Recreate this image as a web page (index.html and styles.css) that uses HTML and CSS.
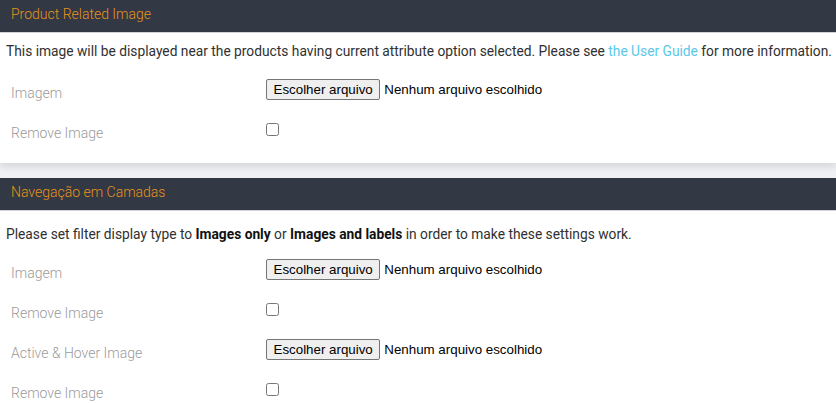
FILE: index.html
```html
<!DOCTYPE html>
<html lang="pt-BR">
<head>
<meta charset="utf-8">
<link rel="stylesheet" href="styles.css">
</head>
<body>
<section class="panel">
  <div class="panel-head">Product Related Image</div>
  <div class="panel-body">
    <p class="desc">This image will be displayed near the products having current attribute option selected. Please see <a href="#">the User Guide</a> for more information.</p>
    <div class="row">
      <div class="label">Imagem</div>
      <div class="value"><span class="file-btn">Escolher arquivo</span><span class="file-name">Nenhum arquivo escolhido</span></div>
    </div>
    <div class="row">
      <div class="label">Remove Image</div>
      <div class="value"><input type="checkbox" class="check"></div>
    </div>
  </div>
</section>
<section class="panel second">
  <div class="panel-head">Navegação em Camadas</div>
  <div class="panel-body">
    <p class="desc">Please set filter display type to <b>Images only</b> or <b>Images and labels</b> in order to make these settings work.</p>
    <div class="row">
      <div class="label">Imagem</div>
      <div class="value"><span class="file-btn">Escolher arquivo</span><span class="file-name">Nenhum arquivo escolhido</span></div>
    </div>
    <div class="row">
      <div class="label">Remove Image</div>
      <div class="value"><input type="checkbox" class="check"></div>
    </div>
    <div class="row">
      <div class="label">Active &amp; Hover Image</div>
      <div class="value"><span class="file-btn">Escolher arquivo</span><span class="file-name">Nenhum arquivo escolhido</span></div>
    </div>
    <div class="row">
      <div class="label">Remove Image</div>
      <div class="value"><input type="checkbox" class="check"></div>
    </div>
  </div>
</section>
</body>
</html>
```
FILE: styles.css
```css
html, body {
  margin: 0;
  padding: 0;
  background: #eef0f4;
  font-family: Roboto, "Liberation Sans", sans-serif;
  font-size: 14px;
  color: #303030;
}
.panel {
  background: #fff;
  box-shadow: 0 3px 8px rgba(0, 0, 0, 0.12);
}
.panel.second {
  margin-top: 15px;
  box-shadow: none;
}
.panel-head {
  background: #323844;
  color: #e8931a;
  font-weight: 300;
  font-size: 14px;
  line-height: 29px;
  padding: 0 11px;
  border-bottom: 1px solid #d0d3d8;
  box-sizing: border-box;
  height: 33px;
}
.panel-body {
  padding: 8px 0 10px 0;
}
.second .panel-body {
  padding-top: 13px;
}
.desc {
  margin: 0 0 12px 0;
  padding: 0 6px;
  line-height: 20px;
  font-size: 13.78px;
  white-space: nowrap;
}
.second .desc {
  margin-bottom: 9px;
}
.desc a {
  color: #5bc8e8;
  text-decoration: none;
}
.desc b {
  font-weight: 700;
  color: #111;
}
.row {
  display: flex;
  align-items: center;
  height: 40px;
}
.label {
  width: 266px;
  padding-left: 11px;
  box-sizing: border-box;
  color: #9a9a9a;
  font-weight: 300;
}
.value {
  display: flex;
  align-items: center;
  margin-bottom: 8px;
}
.file-btn {
  font-family: "Liberation Sans", Arial, sans-serif;
  font-size: 13.33px;
  color: #000;
  background: #efefef;
  border: 1px solid #767676;
  border-radius: 2px;
  padding: 1px 6.5px;
  line-height: 17px;
}
.file-name {
  font-family: "Liberation Sans", Arial, sans-serif;
  font-size: 13.33px;
  color: #000;
  margin-left: 4px;
}
.check {
  margin: 0;
  width: 13px;
  height: 13px;
}
```
